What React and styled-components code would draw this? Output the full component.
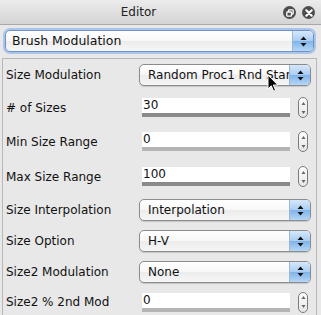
import React from 'react'
import styled, { createGlobalStyle } from 'styled-components'

const Global = createGlobalStyle`
  html, body {
    margin: 0;
    padding: 0;
    background: #e8e8e8;
  }
  body {
    font-family: "DejaVu Sans", "Liberation Sans", sans-serif;
    color: #111;
  }
`

const rows = [
  { label: 'Size Modulation', kind: 'select', value: 'Random Proc1 Rnd Start', h: 32 },
  { label: '# of Sizes', kind: 'number', value: '30', h: 33, bar: '#8a8a8a' },
  { label: 'Min Size Range', kind: 'number', value: '0', h: 35, bar: '#b4b4b4' },
  { label: 'Max Size Range', kind: 'number', value: '100', h: 35, bar: '#8a8a8a' },
  { label: 'Size Interpolation', kind: 'select', value: 'Interpolation', h: 32 },
  { label: 'Size Option', kind: 'select', value: 'H-V', h: 30 },
  { label: 'Size2 Modulation', kind: 'select', value: 'None', h: 31 },
  { label: 'Size2 % 2nd Mod', kind: 'number', value: '0', h: 30, bar: '#b4b4b4' },
]

function Arrows() {
  return (
    <svg width="7" height="11" viewBox="0 0 7 11">
      <path d="M3.5 0.5 L6.5 4 L0.5 4 Z" fill="#111" />
      <path d="M3.5 10.5 L6.5 7 L0.5 7 Z" fill="#111" />
    </svg>
  )
}

function Select({ value, wide, focused }) {
  return (
    <SelectBox $focused={focused}>
      <SelectText $wide={wide}>{value}</SelectText>
      <ArrowPart>
        <Arrows />
      </ArrowPart>
    </SelectBox>
  )
}

function NumberField({ value, bar }) {
  return (
    <NumberWrap>
      <Field>
        <FieldText>{value}</FieldText>
        <Bar $color={bar} />
      </Field>
      <Stepper>
        <svg width="5" height="14" viewBox="0 0 5 14">
          <path d="M2.5 1 L4.5 4 L0.5 4 Z" fill="#666" />
          <path d="M2.5 13 L4.5 10 L0.5 10 Z" fill="#666" />
        </svg>
      </Stepper>
    </NumberWrap>
  )
}

function Cursor() {
  return (
    <CursorIcon width="12" height="19" viewBox="0 0 12 19">
      <path d="M1 1 L1 15 L4.3 11.8 L6.6 17.2 L8.6 16.3 L6.3 11 L10.8 11 Z" fill="#000" stroke="#fff" strokeWidth="1" strokeLinejoin="round" />
    </CursorIcon>
  )
}

export default function App() {
  return (
    <Window>
      <Global />
      <TitleBar>
        <Title>Editor</Title>
        <TitleButtons>
          <RoundButton>
            <svg width="8" height="8" viewBox="0 0 8 8">
              <rect x="2.5" y="0.8" width="4.7" height="4.2" rx="0.8" fill="none" stroke="#fff" strokeWidth="1.3" />
              <rect x="0.8" y="3" width="4.7" height="4.2" rx="0.8" fill="#4e4e4e" stroke="#fff" strokeWidth="1.3" />
            </svg>
          </RoundButton>
          <RoundButton>
            <svg width="8" height="8" viewBox="0 0 8 8">
              <path d="M1.3 1.3 L6.7 6.7 M6.7 1.3 L1.3 6.7" stroke="#fff" strokeWidth="2" strokeLinecap="round" />
            </svg>
          </RoundButton>
        </TitleButtons>
      </TitleBar>
      <Header>
        <Select value="Brush Modulation" wide focused />
      </Header>
      <Panel>
        {rows.map((r) => (
          <Row key={r.label} $h={r.h}>
            <Label>{r.label}</Label>
            {r.kind === 'select' ? (
              <Select value={r.value} />
            ) : (
              <NumberField value={r.value} bar={r.bar} />
            )}
          </Row>
        ))}
        <Cursor />
      </Panel>
    </Window>
  )
}

const Window = styled.div`
  width: 321px;
  height: 315px;
  overflow: hidden;
  display: flex;
  flex-direction: column;
  background: #e8e8e8;
`

const TitleBar = styled.div`
  height: 24px;
  flex: none;
  display: flex;
  align-items: center;
  justify-content: center;
  position: relative;
  background: linear-gradient(#ececec, #d4d4d4);
  border-bottom: 1px solid #a8a8a8;
`

const Title = styled.div`
  font-size: 12px;
  color: #222;
  margin-left: -44px;
`

const TitleButtons = styled.div`
  position: absolute;
  right: 6px;
  top: 6px;
  display: flex;
  gap: 6px;
`

const RoundButton = styled.div`
  width: 13px;
  height: 13px;
  border-radius: 50%;
  background: #4e4e4e;
  display: flex;
  align-items: center;
  justify-content: center;
`

const Header = styled.div`
  padding: 4px 6px 5px 4px;
  flex: none;
`

const SelectBox = styled.div`
  height: 20px;
  display: flex;
  align-items: stretch;
  border: 1px solid ${(p) => (p.$focused ? '#6f93c4' : '#8c8c8c')};
  border-radius: 5px;
  overflow: hidden;
  background: linear-gradient(#ffffff, #f7f7f7 50%, #ececec 51%, #f6f6f6);
  box-shadow: ${(p) =>
    p.$focused ? '0 0 0 2px #a9c6ea' : '0 1px 1px rgba(0,0,0,0.15)'};
  margin: ${(p) => (p.$focused ? '1px' : '0')};
`

const SelectText = styled.div`
  flex: 1;
  min-width: 0;
  white-space: nowrap;
  overflow: hidden;
  font-size: ${(p) => (p.$wide ? 12.5 : 12)}px;
  line-height: 20px;
  padding-left: ${(p) => (p.$wide ? 6 : 8)}px;
`

const ArrowPart = styled.div`
  width: 20px;
  flex: none;
  display: flex;
  align-items: center;
  justify-content: center;
  background: linear-gradient(#d6e8fa, #a9cdf2 50%, #7fb4ea 51%, #b5d6f6);
  border-left: 1px solid #9bb8d9;
`

const Panel = styled.div`
  position: relative;
  flex: 1;
  margin: 0 4px 0 2px;
  border: 1px solid #b8b8b8;
  border-bottom: none;
  display: flex;
  flex-direction: column;
`

const Row = styled.div`
  height: ${(p) => p.$h}px;
  flex: none;
  display: grid;
  grid-template-columns: 133px 172px;
  align-items: center;
  padding-left: 3px;
`

const Label = styled.div`
  font-size: 12px;
  white-space: nowrap;
`

const NumberWrap = styled.div`
  display: flex;
  align-items: center;
  padding-left: 3px;
  gap: 8px;
`

const Field = styled.div`
  width: 148px;
  height: 19px;
  background: #fff;
  display: flex;
  flex-direction: column;
`

const FieldText = styled.div`
  flex: 1;
  font-size: 12px;
  line-height: 15px;
  padding-left: 1px;
`

const Bar = styled.div`
  height: 4px;
  background: ${(p) => p.$color};
`

const Stepper = styled.div`
  width: 8px;
  height: 19px;
  border: 1px solid #7a7a7a;
  border-radius: 5px;
  background: linear-gradient(#fdfdfd, #e6e6e6);
  display: flex;
  align-items: center;
  justify-content: center;
`

const CursorIcon = styled.svg`
  position: absolute;
  left: 264px;
  top: 15px;
`
